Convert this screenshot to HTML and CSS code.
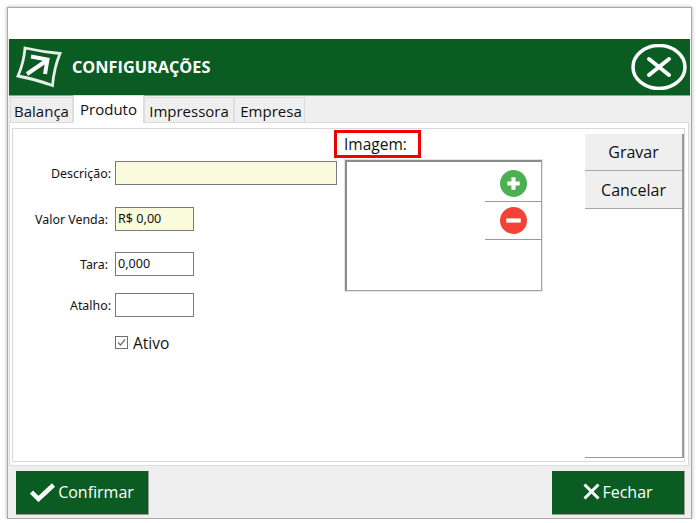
FILE: index.html
```html
<!DOCTYPE html>
<html lang="pt-BR">
<head>
    <meta charset="UTF-8">
    <meta name="viewport" content="width=device-width, initial-scale=1.0">
    <title>Configurações</title>
    <link rel="stylesheet" href="styles.css">
</head>
<body>

    <div class="window">
        <div class="top-gap"></div>

        <!-- Header -->
        <div class="header">
            <svg class="logo" width="46" height="42" viewBox="0 0 46 42">
                <path d="M9 2 Q27 6 44 7.500 Q38 22 36.500 39.500 Q19 33 2 30 Q8 16 9 2 Z" fill="none" stroke="#e8efe9" stroke-width="2.800"/>
                <path d="M11 28 L30 15 M15 10.500 L31.500 13.500 L29 28" fill="none" stroke="#fff" stroke-width="4" stroke-linejoin="miter"/>
            </svg>
            <h1>CONFIGURAÇÕES</h1>
            <svg class="close-icon" width="56" height="46" viewBox="0 0 56 46">
                <ellipse cx="28" cy="23" rx="26" ry="21.500" fill="none" stroke="#fff" stroke-width="3.500"/>
                <path d="M18 15 L38 31 M38 15 L18 31" stroke="#fff" stroke-width="4" stroke-linecap="round"/>
            </svg>
        </div>

        <!-- Tabs -->
        <div class="tabs">
            <div class="tab">Balança</div>
            <div class="tab active">Produto</div>
            <div class="tab">Impressora</div>
            <div class="tab">Empresa</div>
        </div>

        <div class="tab-panel">
            <div class="panel-inner">

                <div class="fields">
                    <div class="field field-desc">
                        <label class="label-wide">Descrição:</label>
                        <div class="input input-full required"></div>
                    </div>
                    <div class="field field-valor">
                        <label>Valor Venda:</label>
                        <div class="input required">R$ 0,00</div>
                    </div>
                    <div class="field field-tara">
                        <label>Tara:</label>
                        <div class="input">0,000</div>
                    </div>
                    <div class="field field-atalho">
                        <label class="label-wide">Atalho:</label>
                        <div class="input"></div>
                    </div>
                    <div class="check-row">
                        <svg width="13" height="13" viewBox="0 0 13 13">
                            <rect x="0.500" y="0.500" width="12" height="12" fill="#fff" stroke="#6e6e6e"/>
                            <path d="M3 6.500 L5.500 9 L10 3.500" fill="none" stroke="#6e6e6e" stroke-width="1.300"/>
                        </svg>
                        <span>Ativo</span>
                    </div>
                </div>

                <div class="image-col">
                    <div class="image-label">Imagem:</div>
                    <div class="image-box">
                        <div class="image-tools">
                            <div class="image-tool">
                                <svg width="27" height="27" viewBox="0 0 26 26">
                                    <circle cx="13" cy="13" r="13" fill="#4caf50"/>
                                    <path d="M13 7 V19 M7 13 H19" stroke="#fff" stroke-width="4"/>
                                </svg>
                            </div>
                            <div class="image-tool">
                                <svg width="27" height="27" viewBox="0 0 26 26">
                                    <circle cx="13" cy="13" r="13" fill="#f44336"/>
                                    <path d="M6 13 H20" stroke="#fff" stroke-width="4"/>
                                </svg>
                            </div>
                        </div>
                    </div>
                </div>

                <div class="actions">
                    <button class="action-button">Gravar</button>
                    <button class="action-button">Cancelar</button>
                </div>

            </div>
        </div>

        <!-- Footer -->
        <div class="footer">
            <button class="footer-button">
                <svg width="26" height="20" viewBox="0 0 26 20">
                    <path d="M1.500 10 L8.500 17 L23.500 3" fill="none" stroke="#fff" stroke-width="4.500"/>
                </svg>
                Confirmar
            </button>
            <button class="footer-button">
                <svg width="17" height="17" viewBox="0 0 17 17">
                    <path d="M1.500 1.500 L15.500 15.500 M15.500 1.500 L1.500 15.500" stroke="#fff" stroke-width="3"/>
                </svg>
                Fechar
            </button>
        </div>
    </div>

</body>
</html>
```
FILE: styles.css
```css
/* General Styles */
body {
    margin: 0;
    padding: 0;
    background: #fff;
    font-family: "Open Sans", "Noto Sans", sans-serif;
    color: #111;
}

.window {
    width: 683px;
    height: 510px;
    margin: 7px 0 0 7px;
    border: 1px solid #a8a8a8;
    background: #efefef;
    box-shadow: 0 0 4px rgba(0, 0, 0, 0.3);
    overflow: hidden;
}

.top-gap {
    height: 31px;
    background: #fff;
}

/* Header */
.header {
    display: flex;
    align-items: center;
    height: 57px;
    margin: 0 1px;
    padding: 0 3px 0 7px;
    background: #0b5c23;
    border-bottom: 1px solid #9a9a9a;
    box-sizing: border-box;
}

.logo {
    margin-right: 10px;
}

.header h1 {
    flex: 1;
    margin: 0;
    font-size: 16.300px;
    font-weight: 700;
    color: #fff;
}

/* Tabs */
.tabs {
    display: flex;
    align-items: flex-end;
    height: 26px;
    padding-left: 2px;
}

.tab {
    width: 63px;
    height: 25px;
    border: 1px solid #dcdcdc;
    border-bottom: none;
    box-sizing: border-box;
    text-align: center;
    font-size: 15px;
    line-height: 26px;
    background: #efefef;
}

.tab.active {
    position: relative;
    width: 71px;
    height: 28px;
    margin-bottom: -1px;
    background: #fff;
    line-height: 26px;
}

.tab:nth-child(3) {
    width: 90px;
}

.tab:nth-child(4) {
    width: 71px;
    padding-left: 3px;
}

.tab-panel {
    height: 344px;
    margin: 0 2px 0 1px;
    padding: 5px 3px 3px 2px;
    background: #fff;
    border: 1px solid #dcdcdc;
    box-sizing: border-box;
}

.panel-inner {
    display: flex;
    height: 100%;
    border: 1px solid #d8d8d8;
    box-sizing: border-box;
}

/* Form */
.fields {
    width: 324px;
    padding-top: 32px;
    flex-shrink: 0;
}

.field {
    display: flex;
    align-items: center;
    height: 24px;
}

.field label {
    width: 102px;
    padding-right: 7px;
    box-sizing: border-box;
    text-align: right;
    font-size: 12.400px;
    font-family: "Noto Sans", sans-serif;
}

.field label.label-wide {
    padding-right: 4px;
}

.field-valor {
    margin-top: 22px;
}

.field-tara {
    margin-top: 21px;
}

.field-atalho {
    margin-top: 17px;
}

.input {
    width: 79px;
    height: 24px;
    padding-left: 2px;
    border: 1px solid #7a7a7a;
    box-sizing: border-box;
    background: #fff;
    font-size: 12.600px;
    line-height: 21px;
    font-family: "Noto Sans", sans-serif;
}

.input-full {
    width: 222px;
}

.required {
    background: #fafadc;
}

.check-row {
    display: flex;
    align-items: center;
    gap: 5px;
    margin: 15px 0 0 102px;
    font-size: 15.500px;
    line-height: 22px;
    height: 20px;
}

.check-row span {
    padding-top: 2px;
}

/* Image */
.image-col {
    width: 248px;
    flex-shrink: 0;
}

.image-label {
    width: 87px;
    height: 28px;
    margin: 1px 0 0 -3px;
    padding-left: 7px;
    border: 3px solid #f00000;
    box-sizing: border-box;
    font-size: 15.500px;
    line-height: 22px;
}

.image-box {
    display: flex;
    justify-content: flex-end;
    width: 197px;
    height: 131px;
    margin: 2px 0 0 8px;
    border-style: solid;
    border-color: #8c8c8c #a4a4a4 #a4a4a4 #8c8c8c;
    border-width: 2px 1px 1px 2px;
    box-sizing: border-box;
    outline: 1px solid #e4e4e4;
}

.image-tools {
    width: 56px;
}

.image-tool {
    display: flex;
    align-items: center;
    justify-content: center;
    height: 38px;
    border-bottom: 1px solid #9a9a9a;
    box-sizing: border-box;
}

.image-tool:first-child {
    height: 40px;
    padding-top: 3px;
}

/* Buttons */
.actions {
    display: flex;
    flex-direction: column;
    width: 99px;
    border-right: 2px solid #9a9a9a;
    border-bottom: 1px solid #9a9a9a;
    margin-top: 5px;
    margin-bottom: 3px;
    box-sizing: border-box;
}

.action-button {
    height: 37px;
    padding: 0;
    border: none;
    border-bottom: 1px solid #a8a8a8;
    background: #efefef;
    font-family: inherit;
    font-size: 16px;
    color: #111;
}

.action-button:last-child {
    height: 38px;
}

/* Footer */
.footer {
    display: flex;
    justify-content: space-between;
    padding: 5px 6px 0 8px;
}

.footer-button {
    display: flex;
    align-items: center;
    justify-content: center;
    gap: 2px;
    width: 133px;
    height: 44px;
    padding: 0 0 2px;
    border: none;
    border-right: 1px solid #9a9a9a;
    border-bottom: 1px solid #9a9a9a;
    background: #0b5c23;
    color: #fff;
    font-family: inherit;
    font-size: 16px;
}
```
